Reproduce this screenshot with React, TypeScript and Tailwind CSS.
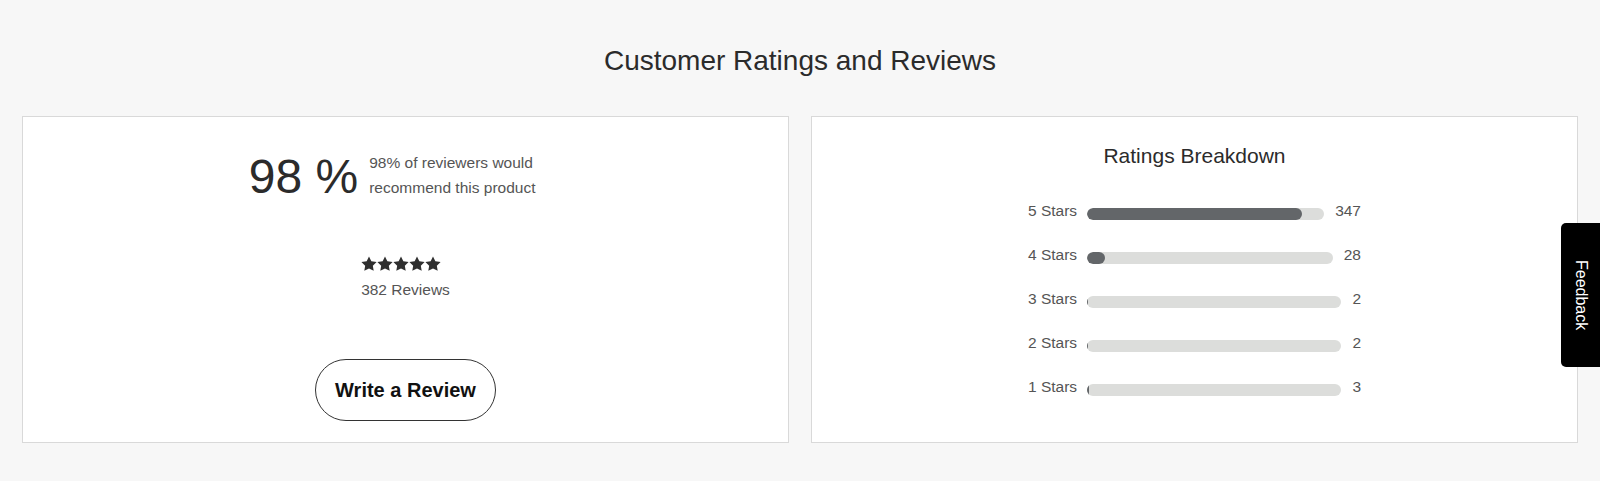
import React from "react";

const rows = [
  { label: "5 Stars", count: 347 },
  { label: "4 Stars", count: 28 },
  { label: "3 Stars", count: 2 },
  { label: "2 Stars", count: 2 },
  { label: "1 Stars", count: 3 },
];
const total = 382;

function Star() {
  return (
    <svg width="16" height="16" viewBox="1.5 1.5 21 21" fill="#2f2f2f">
      <path d="M12 2l3.09 6.26L22 9.27l-5 4.87 1.18 6.88L12 17.77l-6.18 3.25L7 14.14 2 9.27l6.91-1.01L12 2z" />
    </svg>
  );
}

export default function App() {
  return (
    <div className="relative bg-[#f7f7f7] px-[22px] pt-[45px] pb-[38px] font-['Liberation_Sans',Arial,sans-serif]">
      <h2 className="text-center text-[28px] leading-[32px] text-[#2b2b2b] mb-[39px]">
        Customer Ratings and Reviews
      </h2>

      <div className="grid grid-cols-2 gap-[22px]">
        {/* summary */}
        <div className="bg-white border border-[#d9d9d9] flex flex-col items-center pt-[33px] pb-[21px]">
          <div className="flex items-end gap-[11px]">
            <span className="text-[48px] leading-[48px] text-[#2b2b2b]">98 %</span>
            <p className="w-[193px] text-[15.5px] leading-[25px] text-[#555] mb-[1px]">
              98% of reviewers would
              <br />
              recommend this product
            </p>
          </div>
          <div className="mt-[55px] flex flex-col items-start">
            <div className="flex h-[16px]">
              {[0, 1, 2, 3, 4].map((i) => (
                <Star key={i} />
              ))}
            </div>
            <span className="mt-[8px] text-[15.5px] leading-[20px] text-[#555]">382 Reviews</span>
          </div>
          <button className="mt-[59px] w-[181px] h-[62px] rounded-full border border-[#333] bg-white text-[20px] font-bold text-[#111]">
            Write a Review
          </button>
        </div>

        {/* breakdown */}
        <div className="bg-white border border-[#d9d9d9] flex flex-col items-center pt-[27px]">
          <h3 className="text-[21px] leading-[24px] text-[#2b2b2b] mb-[34px]">Ratings Breakdown</h3>
          <div className="flex flex-col gap-[26px] w-[333px]">
            {rows.map((r) => (
              <div key={r.label} className="flex items-start h-[18px] text-[15.5px] leading-[18px] text-[#555]">
                <span>{r.label}</span>
                <div className="flex-1 ml-[10px] mr-[11px] mt-[6px] h-[12px] rounded-full bg-[#dcdddb] overflow-hidden">
                  <div
                    className="h-full rounded-full bg-[#636669]"
                    style={{ width: `${(r.count / total) * 100}%` }}
                  />
                </div>
                <span>{r.count}</span>
              </div>
            ))}
          </div>
        </div>
      </div>

      <div className="absolute right-0 top-[223px] w-[39px] h-[144px] bg-black rounded-l-[5px] flex items-center justify-center">
        <span className="[writing-mode:vertical-rl] text-white text-[16px]">Feedback</span>
      </div>
    </div>
  );
}
